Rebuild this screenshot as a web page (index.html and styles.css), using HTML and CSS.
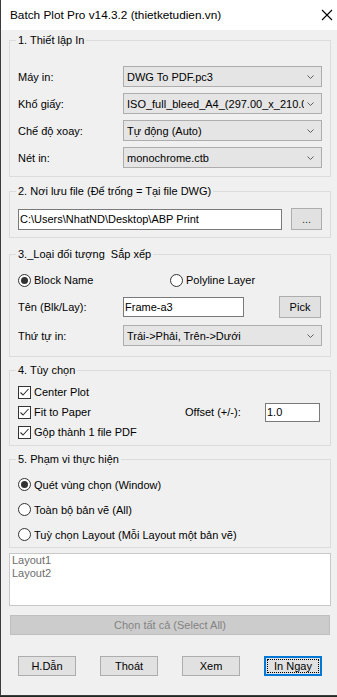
FILE: index.html
```html
<!DOCTYPE html>
<html>
<head>
<meta charset="utf-8">
<link rel="stylesheet" href="styles.css">
</head>
<body>
<div class="window">
  <div class="titlebar">
    <span class="title">Batch Plot Pro v14.3.2 (thietketudien.vn)</span>
    <svg class="close" width="12" height="12" viewBox="0 0 12 12"><path d="M1 1L11 11M11 1L1 11" stroke="#000" stroke-width="1.1" fill="none"/></svg>
  </div>
  <div class="client">
    <fieldset class="group g1">
      <legend>1. Thiết lập In</legend>
      <div class="row"><span class="lbl">Máy in:</span><div class="combo"><span class="val">DWG To PDF.pc3</span><svg class="chev" width="7" height="4" viewBox="0 0 7 4"><path d="M0.5 0.5L3.5 3.5L6.5 0.5" stroke="#606060" fill="none"/></svg></div></div>
      <div class="row"><span class="lbl">Khổ giấy:</span><div class="combo"><span class="val">ISO_full_bleed_A4_(297.00_x_210.00_MM)</span><svg class="chev" width="7" height="4" viewBox="0 0 7 4"><path d="M0.5 0.5L3.5 3.5L6.5 0.5" stroke="#606060" fill="none"/></svg></div></div>
      <div class="row"><span class="lbl">Chế độ xoay:</span><div class="combo"><span class="val">Tự động (Auto)</span><svg class="chev" width="7" height="4" viewBox="0 0 7 4"><path d="M0.5 0.5L3.5 3.5L6.5 0.5" stroke="#606060" fill="none"/></svg></div></div>
      <div class="row"><span class="lbl">Nét in:</span><div class="combo"><span class="val">monochrome.ctb</span><svg class="chev" width="7" height="4" viewBox="0 0 7 4"><path d="M0.5 0.5L3.5 3.5L6.5 0.5" stroke="#606060" fill="none"/></svg></div></div>
    </fieldset>

    <fieldset class="group g2">
      <legend>2. Nơi lưu file (Để trống = Tại file DWG)</legend>
      <div class="row">
        <div class="textbox path">C:\Users\NhatND\Desktop\ABP Print</div>
        <div class="btn browse">...</div>
      </div>
    </fieldset>

    <fieldset class="group g3">
      <legend>3._Loại đối tượng&nbsp; Sắp xếp</legend>
      <div class="row radios">
        <label class="opt blk"><span class="radio on"></span>Block Name</label>
        <label class="opt"><span class="radio"></span>Polyline Layer</label>
      </div>
      <div class="row namerow">
        <span class="lbl">Tên (Blk/Lay):</span>
        <div class="textbox name">Frame-a3</div>
        <div class="btn pick">Pick</div>
      </div>
      <div class="row orderrow"><span class="lbl">Thứ tự in:</span><div class="combo"><span class="val">Trái-&gt;Phải, Trên-&gt;Dưới</span><svg class="chev" width="7" height="4" viewBox="0 0 7 4"><path d="M0.5 0.5L3.5 3.5L6.5 0.5" stroke="#606060" fill="none"/></svg></div></div>
    </fieldset>

    <fieldset class="group g4">
      <legend>4. Tùy chọn</legend>
      <div class="checks">
        <label class="opt"><span class="check"><svg width="11" height="11" viewBox="0 0 11 11"><path d="M1.5 5.5L4 8L9.5 2" stroke="#333" stroke-width="1.1" fill="none"/></svg></span>Center Plot</label>
        <div class="row fitrow">
          <label class="opt fit"><span class="check"><svg width="11" height="11" viewBox="0 0 11 11"><path d="M1.5 5.5L4 8L9.5 2" stroke="#333" stroke-width="1.1" fill="none"/></svg></span>Fit to Paper</label>
          <span class="offset">Offset (+/-):</span>
          <div class="textbox off">1.0</div>
        </div>
        <label class="opt"><span class="check"><svg width="11" height="11" viewBox="0 0 11 11"><path d="M1.5 5.5L4 8L9.5 2" stroke="#333" stroke-width="1.1" fill="none"/></svg></span>Gộp thành 1 file PDF</label>
      </div>
    </fieldset>

    <fieldset class="group g5">
      <legend>5. Phạm vi thực hiện</legend>
      <div class="radlist">
        <label class="opt"><span class="radio on"></span>Quét vùng chọn (Window)</label>
        <label class="opt"><span class="radio"></span>Toàn bộ bản vẽ (All)</label>
        <label class="opt"><span class="radio"></span>Tuỳ chọn Layout (Mỗi Layout một bản vẽ)</label>
      </div>
    </fieldset>

    <div class="listbox">
      <div>Layout1</div>
      <div>Layout2</div>
    </div>

    <div class="btn selall">Chọn tất cả (Select All)</div>

    <div class="actions">
      <div class="btn act">H.Dẫn</div>
      <div class="btn act">Thoát</div>
      <div class="btn act">Xem</div>
      <div class="btn act default"><span class="focus">In Ngay</span></div>
    </div>
  </div>
</div>
</body>
</html>
```

FILE: styles.css
```css
* { box-sizing: border-box; }
html, body { margin: 0; padding: 0; }
body {
  width: 337px;
  height: 697px;
  overflow: hidden;
  background: #1e2a22;
  font-family: "Liberation Sans", Arial, sans-serif;
  font-size: 11px;
  color: #000;
}
.window {
  width: 337px;
  height: 696px;
  border-left: 1px solid #3c3c3c;
  border-bottom: 1px solid #3c3c3c;
  display: flex;
  flex-direction: column;
  background: #f0f0f0;
}
.titlebar {
  height: 30px;
  background: #fff;
  display: flex;
  align-items: center;
  justify-content: space-between;
  padding: 0 4px 0 9px;
  flex: none;
}
.title { font-size: 11.8px; color: #000; }
.close { margin-top: -1px; }
.client {
  flex: 1;
  display: flex;
  flex-direction: column;
  padding: 3px 6px 0 8px;
}
.group {
  margin: 0;
  border: 1px solid #dcdcdc;
  min-width: 0;
  padding: 0 8px;
}
.group legend {
  padding: 0 2px;
  margin-left: -2px;
  line-height: 15px;
}
.row {
  display: flex;
  align-items: center;
}
.lbl { width: 105px; flex: none; }

/* group 1 */
.g1 { padding-top: 18px; padding-bottom: 8px; }
.g1 .row { height: 21px; }
.g1 .row + .row { margin-top: 6px; }

.combo {
  width: 199px;
  height: 21px;
  background: #e5e5e5;
  border: 1px solid #adadad;
  display: flex;
  align-items: center;
  padding: 0 7px 0 3px;
  overflow: hidden;
}
.combo .val { flex: 1; white-space: nowrap; overflow: hidden; }
.chev { flex: none; margin-left: 3px; }
.textbox {
  background: #fff;
  border: 1px solid #7a7a7a;
  display: flex;
  align-items: center;
  padding: 0 1px;
  white-space: nowrap;
}
.btn {
  background: #e1e1e1;
  border: 1px solid #adadad;
  display: flex;
  align-items: center;
  justify-content: center;
}

/* group 2 */
.g2 { margin-top: 7px; padding-top: 9px; padding-bottom: 7px; }
.g2 .row { height: 22px; }
.path { width: 264px; height: 21px; }
.browse { width: 31px; height: 22px; margin-left: 9px; color: #333; }

/* group 3 */
.g3 { margin-top: 9px; padding-top: 6px; padding-bottom: 10px; }
.radios { height: 24px; }
.opt { display: flex; align-items: center; white-space: nowrap; }
.blk { width: 152px; }
.radio {
  width: 13px; height: 13px;
  border: 1px solid #333;
  border-radius: 50%;
  background: #fff;
  margin-right: 3px;
  display: flex; align-items: center; justify-content: center;
  flex: none;
}
.radio.on::after {
  content: "";
  width: 7px; height: 7px;
  border-radius: 50%;
  background: #333;
}
.namerow { height: 22px; margin-top: 4px; }
.name { width: 121px; height: 20px; }
.pick { width: 42px; height: 22px; margin-left: 35px; }
.orderrow { height: 21px; margin-top: 7px; }

/* group 4 */
.g4 { margin-top: 6px; padding-top: 4px; padding-bottom: 3px; }
.checks { display: flex; flex-direction: column; }
.checks > .opt, .checks > .row { height: 20px; }
.check {
  width: 13px; height: 13px;
  border: 1px solid #333;
  background: #fff;
  margin-right: 3px;
  display: flex; align-items: center; justify-content: center;
  flex: none;
}
.fit { width: 167px; }
.offset { width: 80px; }
.off { width: 55px; height: 19px; }

/* group 5 */
.g5 { margin-top: 6px; padding-top: 5px; padding-bottom: 0; }
.radlist { display: flex; flex-direction: column; }
.radlist .opt { height: 25px; }

.listbox {
  margin-top: 5px;
  width: 322px;
  height: 53px;
  background: #fff;
  border: 1px solid #c8c8c8;
  color: #6d6d6d;
  padding: 0 2px;
  line-height: 13px;
}
.selall {
  margin: 9px 0 0 1px;
  width: 320px;
  height: 20px;
  background: #cccccc;
  border-color: #bfbfbf;
  color: #838383;
}
.actions {
  display: flex;
  gap: 24px;
  padding: 21px 0 0 9px;
}
.act { width: 58px; height: 20px; }
.default {
  border: 2px solid #0078d7;
  padding: 1px;
}
.focus {
  border: 1px dotted #000;
  width: 100%;
  height: 100%;
  display: flex; align-items: center; justify-content: center;
}
```
